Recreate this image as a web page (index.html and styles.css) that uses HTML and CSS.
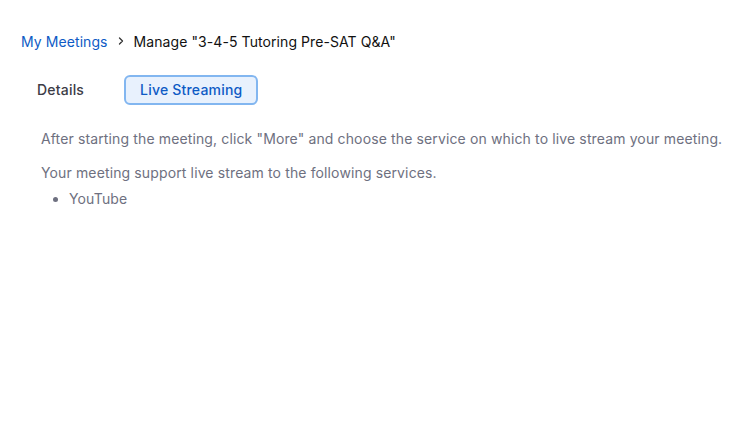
FILE: index.html
```html
<!DOCTYPE html>
<html>
<head>
<meta charset="utf-8">
<link rel="stylesheet" href="styles.css">
</head>
<body>
<div class="page">
  <nav class="crumbs">
    <a class="crumb-link">My Meetings</a>
    <svg class="chev" width="8" height="10" viewBox="0 0 8 10"><path d="M2.5 2 L5.5 5 L2.5 8" fill="none" stroke="#333" stroke-width="1.3" stroke-linecap="round" stroke-linejoin="round"/></svg>
    <span class="crumb-current">Manage "3-4-5 Tutoring Pre-SAT Q&amp;A"</span>
  </nav>
  <div class="tabs">
    <div class="tab">Details</div>
    <div class="tab active">Live Streaming</div>
  </div>
  <div class="content">
    <p class="para">After starting the meeting, click "More" and choose the service on which to live stream your meeting.</p>
    <p class="para second">Your meeting support live stream to the following services.</p>
    <ul class="list">
      <li>YouTube</li>
    </ul>
  </div>
</div>
</body>
</html>
```
FILE: styles.css
```css
html, body {
  margin: 0;
  padding: 0;
  background: #fff;
}
body {
  font-family: Inter, "Noto Sans", sans-serif;
  -webkit-font-smoothing: antialiased;
}
.page {
  padding: 32px 21px 0;
}
.crumbs {
  display: flex;
  align-items: center;
  gap: 9px;
  font-size: 14px;
  height: 18px;
  letter-spacing: 0.08px;
}
.crumb-link {
  color: #0e5bc5;
}
.crumb-current {
  color: #111;
}
.tabs {
  display: flex;
  align-items: center;
  gap: 24px;
  margin-top: 25px;
}
.tab {
  font-size: 14px;
  font-weight: 500;
  color: #3c3c46;
  padding: 4px 14px;
  border: 2px solid transparent;
  border-radius: 6px;
  line-height: 18px;
  letter-spacing: 0.2px;
}
.active {
  color: #0e5bc5;
  background: #e8f1fd;
  border-color: #82b6f0;
}
.content {
  padding-left: 20px;
  margin-top: 25px;
}
.para {
  margin: 0;
  font-size: 14px;
  line-height: 18px;
  color: #6e7080;
  letter-spacing: 0.13px;
}
.second {
  margin-top: 16px;
}
.list {
  margin: 8px 0 0;
  padding-left: 28px;
  font-size: 14px;
  line-height: 18px;
  color: #6e7080;
  letter-spacing: 0.13px;
}
```
